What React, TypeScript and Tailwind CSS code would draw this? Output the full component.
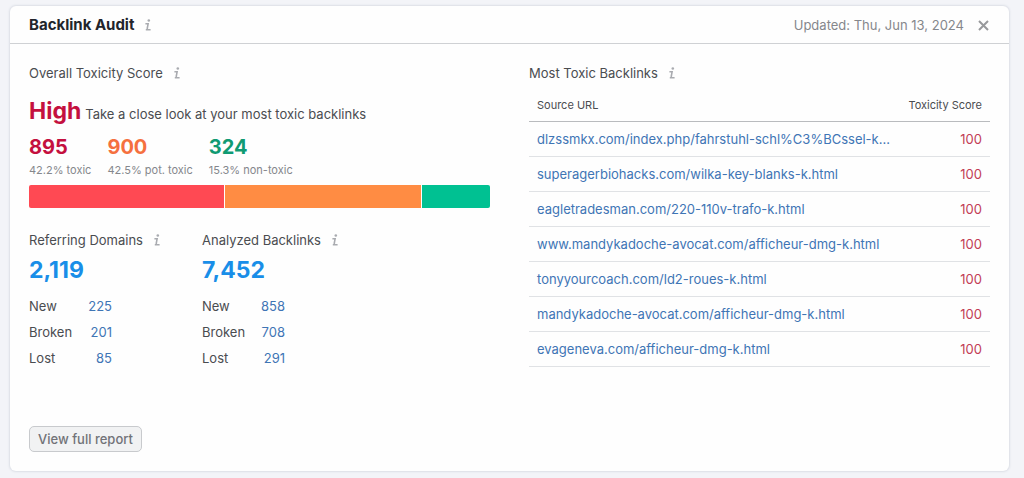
import React from 'react';

interface InfoButtonProps {
  label: string;
}

interface Stat {
  value: string;
  caption: string;
  share: number;
  textClass: string;
  barClass: string;
}

interface Metric {
  title: string;
  total: string;
  rows: { label: string; value: string }[];
}

const stats: Stat[] = [
  { value: '895', caption: '42.2% toxic', share: 42.2, textClass: 'text-[#c4103f]', barClass: 'bg-[#ff4953]' },
  { value: '900', caption: '42.5% pot. toxic', share: 42.5, textClass: 'text-[#f5703f]', barClass: 'bg-[#ff8c43]' },
  { value: '324', caption: '15.3% non-toxic', share: 14.7, textClass: 'text-[#109a72]', barClass: 'bg-[#00c192]' },
];

const metrics: Metric[] = [
  {
    title: 'Referring Domains',
    total: '2,119',
    rows: [
      { label: 'New', value: '225' },
      { label: 'Broken', value: '201' },
      { label: 'Lost', value: '85' },
    ],
  },
  {
    title: 'Analyzed Backlinks',
    total: '7,452',
    rows: [
      { label: 'New', value: '858' },
      { label: 'Broken', value: '708' },
      { label: 'Lost', value: '291' },
    ],
  },
];

const backlinks = [
  'dlzssmkx.com/index.php/fahrstuhl-schl%C3%BCssel-k...',
  'superagerbiohacks.com/wilka-key-blanks-k.html',
  'eagletradesman.com/220-110v-trafo-k.html',
  'www.mandykadoche-avocat.com/afficheur-dmg-k.html',
  'tonyyourcoach.com/ld2-roues-k.html',
  'mandykadoche-avocat.com/afficheur-dmg-k.html',
  'evageneva.com/afficheur-dmg-k.html',
];

const InfoButton: React.FC<InfoButtonProps> = ({ label }) => (
  <button type="button" aria-label={label} className="text-[#a9abb0]">
    <svg width="8" height="12" viewBox="0 0 8 12" fill="none" stroke="currentColor" strokeWidth="1.6">
      <circle cx="4.8" cy="1.5" r="1.3" fill="currentColor" stroke="none" />
      <path d="M1.4 4.8H4.1L3.3 9.2Q3.1 10.7 4.3 10.7H6.6M1.8 10.7H4.2" />
    </svg>
  </button>
);

const MetricBlock: React.FC<{ metric: Metric }> = ({ metric }) => (
  <div>
    <div className="flex items-center gap-2.5">
      <h3>{metric.title}</h3>
      <InfoButton label={`About ${metric.title}`} />
    </div>
    <a href="#" className="mt-1.5 block text-[23px] leading-7 font-bold text-[#198ee8]">
      {metric.total}
    </a>
    <dl className="mt-[9px] w-[83px]">
      {metric.rows.map((row) => (
        <div key={row.label} className="flex justify-between leading-[26px]">
          <dt>{row.label}</dt>
          <dd>
            <a href="#" className="text-[#3f75b5]">{row.value}</a>
          </dd>
        </div>
      ))}
    </dl>
  </div>
);

const App: React.FC = () => {
  return (
    <div className="min-h-screen bg-[#f3f4f8] pt-1.5 pr-[15px] pb-1.5 pl-2.5 font-['Inter',sans-serif] text-[13px] leading-5 text-[#4a4c50]">
      <section className="rounded-md bg-[#fefefe] shadow-[0_0_2px_1px_#dcdfe6]">
        <header className="flex items-center justify-between border-b border-[#cfd1d4] pt-[9px] pr-5 pb-2 pl-[19px]">
          <div className="flex items-center gap-2.5">
            <h2 className="text-[15px] font-bold text-[#22252b]">Backlink Audit</h2>
            <InfoButton label="About Backlink Audit" />
          </div>
          <div className="flex items-center gap-3.5 text-[#85878c]">
            <span>Updated: Thu, Jun 13, 2024</span>
            <button type="button" aria-label="Close">
              <svg width="11" height="11" viewBox="0 0 11 11" fill="none" stroke="#98999c" strokeWidth="2">
                <path d="M1 1L10 10M10 1L1 10" />
              </svg>
            </button>
          </div>
        </header>

        <div className="grid grid-cols-2 gap-[39px] px-[19px] py-[19px]">
          {/* Toxicity overview */}
          <div>
            <div className="flex items-center gap-2.5">
              <h3>Overall Toxicity Score</h3>
              <InfoButton label="About Overall Toxicity Score" />
            </div>
            <p className="mt-3.5 flex items-baseline gap-1">
              <strong className="text-[23px] leading-7 font-bold text-[#c4103f]">High</strong>
              <span>Take a close look at your most toxic backlinks</span>
            </p>
            <ul className="mt-2.5 flex gap-4">
              {stats.map((stat) => (
                <li key={stat.value}>
                  <div className={`text-xl leading-6 font-bold ${stat.textClass}`}>{stat.value}</div>
                  <div className="mt-[3px] text-[11px] leading-4 text-[#85878c]">{stat.caption}</div>
                </li>
              ))}
            </ul>
            <div className="mt-[7px] flex h-[23px] gap-px overflow-hidden rounded-xs">
              {stats.map((stat) => (
                <div key={stat.value} className={stat.barClass} style={{ flex: `${stat.share} 0 0` }} />
              ))}
            </div>

            <div className="mt-[22px] flex gap-[41px]">
              {metrics.map((metric) => (
                <MetricBlock key={metric.title} metric={metric} />
              ))}
            </div>

            <button
              type="button"
              className="mt-[55px] rounded-[5px] border border-[#c8cacd] bg-[#f1f2f3] px-2 py-0.5 font-medium text-[#717378]"
            >
              View full report
            </button>
          </div>

          {/* Backlink list */}
          <div>
            <div className="flex items-center gap-2.5">
              <h3>Most Toxic Backlinks</h3>
              <InfoButton label="About Most Toxic Backlinks" />
            </div>
            <table className="mt-1.5 w-full">
              <thead>
                <tr className="h-8 border-b border-[#b9bbbe] text-[11px]">
                  <th className="px-2 text-left font-normal">Source URL</th>
                  <th className="px-2 text-right font-normal">Toxicity Score</th>
                </tr>
              </thead>
              <tbody>
                {backlinks.map((url) => (
                  <tr key={url} className="h-[35px] border-b border-[#e0e2e5]">
                    <td className="px-2">
                      <a href="#" className="text-[#3f75b5]">{url}</a>
                    </td>
                    <td className="px-2 text-right text-[#c23c55]">100</td>
                  </tr>
                ))}
              </tbody>
            </table>
          </div>
        </div>
      </section>
    </div>
  );
};

export default App;
